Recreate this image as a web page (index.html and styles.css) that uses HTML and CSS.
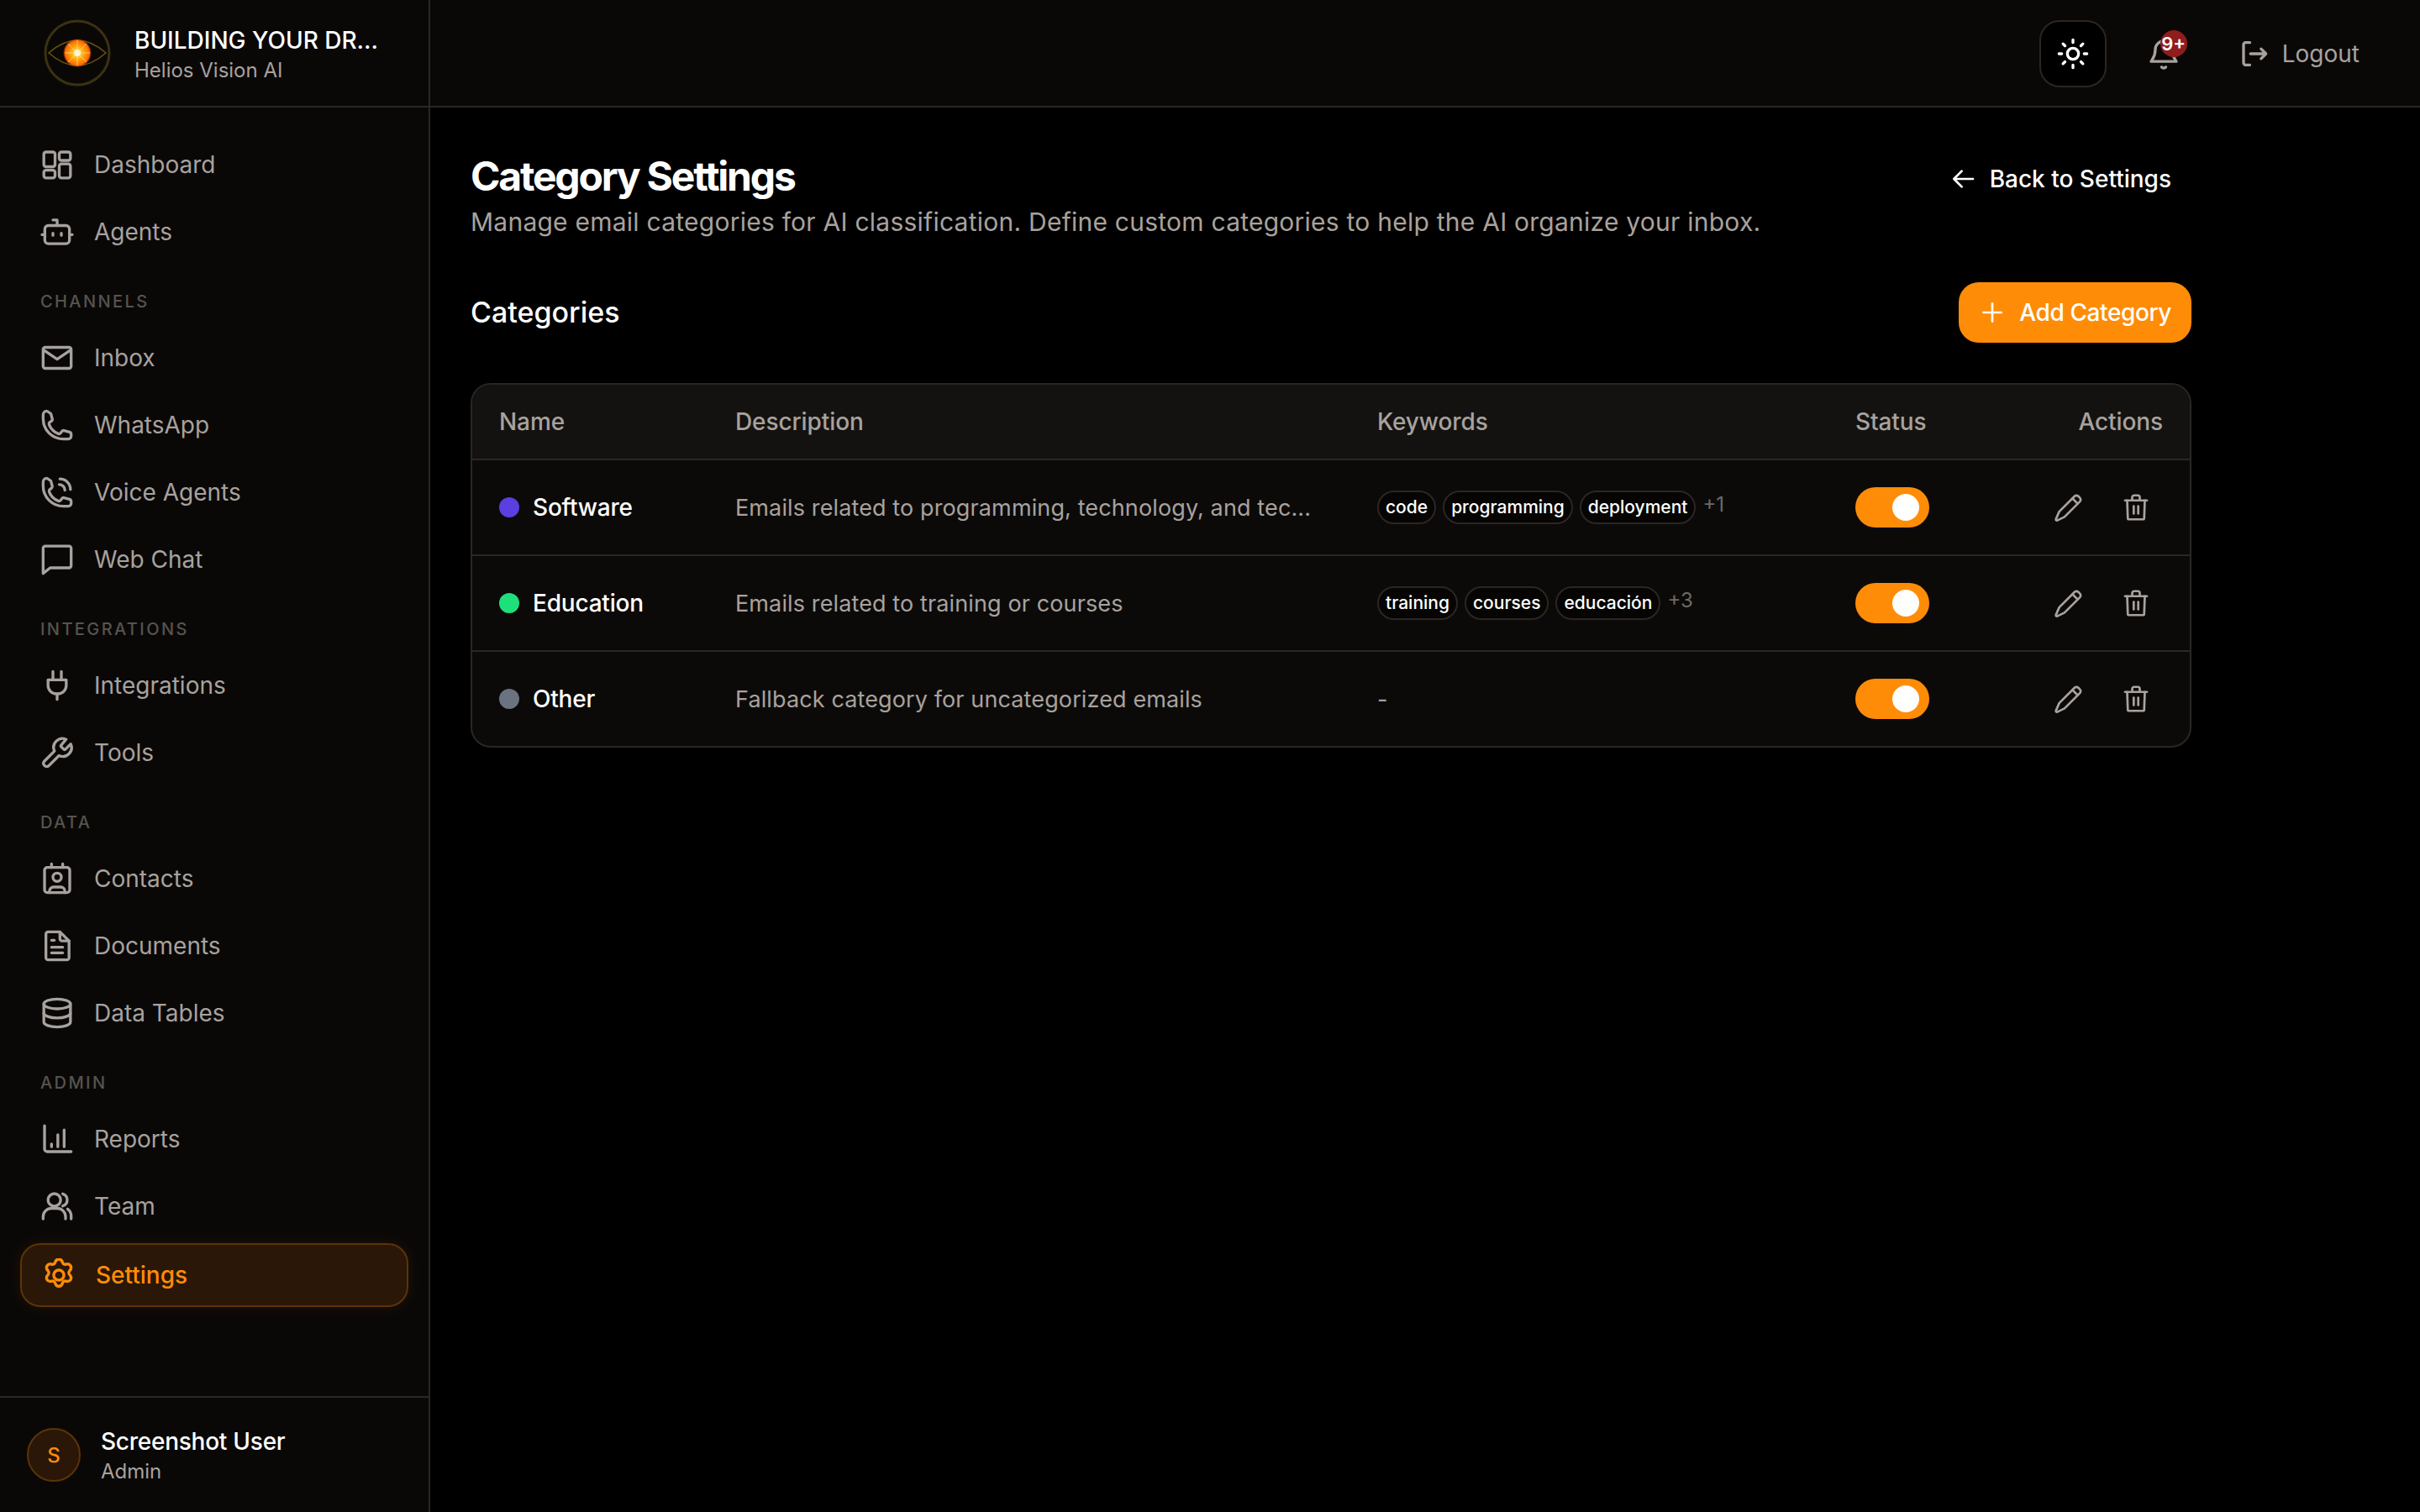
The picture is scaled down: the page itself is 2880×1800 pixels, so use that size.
FILE: index.html
```html
<!DOCTYPE html>
<html lang="en">
<head>
    <meta charset="UTF-8">
    <title>Category Settings - Helios Vision AI</title>
    <link rel="stylesheet" href="styles.css">
</head>
<body>
    <svg class="sprites" aria-hidden="true">
        <symbol id="i-edit" viewBox="0 0 24 24"><path d="M16.6 3.2a2.1 2.1 0 0 1 3 0l1.2 1.2a2.1 2.1 0 0 1 0 3L8.6 19.6 2.8 22.4c-.6.2-1.2-.4-1-1l2.6-6z"/><path d="M15 5l4 4"/></symbol>
        <symbol id="i-trash" viewBox="0 0 24 24"><path d="M3.300 6.500h17.400"/><path d="M5 6.500l.5 14a1 1 0 0 0 1 1h11a1 1 0 0 0 1-1l.5-14"/><path d="M9 6.500V4a1.500 1.500 0 0 1 1.500-1.500h3A1.500 1.500 0 0 1 15 4v2.500"/><path d="M10.200 11v6"/><path d="M13.800 11v6"/></symbol>
    </svg>

    <div class="app">
        <aside class="sidebar">
            <div class="brand">
                <svg class="brand-logo" viewBox="0 0 80 80">
                    <defs>
                        <radialGradient id="sun">
                            <stop offset="0" stop-color="#fff6d0"/>
                            <stop offset="0.2" stop-color="#ffd23a"/>
                            <stop offset="0.55" stop-color="#ff9a00"/>
                            <stop offset="0.85" stop-color="#ff6a00"/>
                            <stop offset="1" stop-color="#ff4a00" stop-opacity="0"/>
                        </radialGradient>
                    </defs>
                    <circle cx="40" cy="40" r="38" fill="none" stroke="#3b3112" stroke-width="3"/>
                    <path d="M6 40Q40 10 74 40Q40 70 6 40Z" fill="none" stroke="#6b5410" stroke-width="1.500"/>
                    <circle cx="40" cy="40" r="17" fill="url(#sun)"/>
                    <path d="M40 25v30M25 40h30M29 29l22 22M51 29L29 51" stroke="#ffd9a0" stroke-width="1" opacity="0.8"/>
                    <circle cx="40" cy="40" r="4" fill="#fff3d0"/>
                </svg>
                <div class="brand-text">
                    <div class="brand-name">BUILDING YOUR DR...</div>
                    <div class="brand-sub">Helios Vision AI</div>
                </div>
            </div>

            <nav class="nav">
                <a class="nav-item"><svg class="icon" viewBox="0 0 24 24"><rect x="2.500" y="3" width="8" height="10.500" rx="1.500"/><rect x="13.500" y="3" width="8" height="6" rx="1.500"/><rect x="2.500" y="16" width="8" height="5.500" rx="1.500"/><rect x="13.500" y="11.500" width="8" height="10" rx="1.500"/></svg>Dashboard</a>
                <a class="nav-item"><svg class="icon" viewBox="0 0 24 24"><rect x="3.200" y="7.500" width="17.600" height="13" rx="2.500"/><path d="M12 7.500V3.500H9"/><path d="M1.200 14h2M20.800 14h2"/><path d="M9 13v1.500M15 13v1.500"/></svg>Agents</a>

                <div class="nav-label">CHANNELS</div>
                <a class="nav-item"><svg class="icon" viewBox="0 0 24 24"><rect x="2" y="4.500" width="20" height="15" rx="1.500"/><path d="M2.500 6.500L12 13l9.500-6.500"/></svg>Inbox</a>
                <a class="nav-item"><svg class="icon" viewBox="0 0 24 24"><path d="M2 7.500c0 8 6.500 14.500 14.500 14.500H20a2 2 0 0 0 2-2v-1.400c0-.8-.5-1.400-1.200-1.600l-3.800-1c-.6-.2-1.200 0-1.600.5l-.9 1.200c-.4.500-1 .7-1.600.5a11 11 0 0 1-6.600-6.600c-.2-.6 0-1.200.5-1.600l1.200-.9c.5-.4.700-1 .5-1.600l-1-3.600C6 3 5.300 2 4.500 2 3 2 2 3.500 2 5z"/></svg>WhatsApp</a>
                <a class="nav-item"><svg class="icon" viewBox="0 0 24 24"><path d="M2 7.500c0 8 6.500 14.500 14.500 14.500H20a2 2 0 0 0 2-2v-1.400c0-.8-.5-1.400-1.200-1.600l-3.800-1c-.6-.2-1.200 0-1.600.5l-.9 1.200c-.4.500-1 .7-1.600.5a11 11 0 0 1-6.600-6.600c-.2-.6 0-1.200.5-1.600l1.200-.9c.5-.4.700-1 .5-1.600l-1-3.600C6 3 5.300 2 4.500 2 3 2 2 3.500 2 5z"/><path d="M14 2.500a7.500 7.500 0 0 1 7.500 7.500"/><path d="M13.500 6.500a4 4 0 0 1 4 4"/></svg>Voice Agents</a>
                <a class="nav-item"><svg class="icon" viewBox="0 0 24 24"><path d="M3.500 2.500h17A1.500 1.500 0 0 1 22 4v12.500a1.500 1.500 0 0 1-1.500 1.500H7l-5 4V4a1.500 1.500 0 0 1 1.500-1.500z"/></svg>Web Chat</a>

                <div class="nav-label">INTEGRATIONS</div>
                <a class="nav-item"><svg class="icon" viewBox="0 0 24 24"><path d="M9 2v6M15 2v6M12 18v4"/><path d="M5.500 8h13v4a6 6 0 0 1-6 6h-1a6 6 0 0 1-6-6z"/></svg>Integrations</a>
                <a class="nav-item"><svg class="icon" viewBox="0 0 24 24"><path d="M15 6.500a1 1 0 0 0 0 1.400l1.600 1.600a1 1 0 0 0 1.400 0l3.700-3.700a6.300 6.300 0 0 1-8.400 8.300l-7.400 7.400a2.300 2.300 0 0 1-3.200-3.200l7.400-7.400a6.300 6.300 0 0 1 8.300-8.400z"/></svg>Tools</a>

                <div class="nav-label">DATA</div>
                <a class="nav-item"><svg class="icon" viewBox="0 0 24 24"><rect x="3" y="4" width="18" height="18" rx="2"/><path d="M8 1.500V4M16 1.500V4"/><circle cx="12" cy="11" r="3"/><path d="M6.500 22v-1a3 3 0 0 1 3-3h5a3 3 0 0 1 3 3v1"/></svg>Contacts</a>
                <a class="nav-item"><svg class="icon" viewBox="0 0 24 24"><path d="M5.500 2h8.500l6.500 6.500v12a1.500 1.500 0 0 1-1.500 1.500H5.500A1.500 1.500 0 0 1 4 20.500v-17A1.500 1.500 0 0 1 5.500 2z"/><path d="M14 2v5a1.500 1.500 0 0 0 1.500 1.500h5"/><path d="M8 8h2M8 13h8M8 17h8"/></svg>Documents</a>
                <a class="nav-item"><svg class="icon" viewBox="0 0 24 24"><ellipse cx="12" cy="5.500" rx="9.500" ry="3.500"/><path d="M2.500 5.500v13c0 1.900 4.300 3.500 9.500 3.500s9.500-1.600 9.500-3.500v-13"/><path d="M2.500 12c0 1.900 4.300 3.500 9.500 3.500s9.500-1.600 9.500-3.500"/></svg>Data Tables</a>

                <div class="nav-label">ADMIN</div>
                <a class="nav-item"><svg class="icon" viewBox="0 0 24 24"><path d="M3 2.500V19a2 2 0 0 0 2 2h17"/><path d="M8 15.500v2M12.500 9v8.500M17 5.500v12"/></svg>Reports</a>
                <a class="nav-item"><svg class="icon" viewBox="0 0 24 24"><circle cx="10" cy="7.500" r="4.500"/><path d="M2 21v-1.500a6 6 0 0 1 6-6h4a6 6 0 0 1 6 6V21"/><path d="M16 3.200a4.500 4.500 0 0 1 0 8.600"/><path d="M19.500 14a6 6 0 0 1 2.500 5v2"/></svg>Team</a>
                <a class="nav-item active"><svg class="icon" viewBox="0 0 24 24"><g transform="translate(12 12) scale(1.14) translate(-12 -12)"><circle cx="12" cy="12" r="3.200"/><path d="M12 2c1.300 0 2 .9 2.300 2 .3.900 1.200 1.400 2.100 1.200 1.100-.3 2.300-.1 3 1 .6 1.200.2 2.200-.6 3-.7.700-.7 1.900 0 2.600.8.800 1.200 1.800.6 3-.7 1.100-1.900 1.300-3 1-.9-.2-1.800.3-2.100 1.200-.3 1.100-1 2-2.300 2s-2-.9-2.300-2c-.3-.9-1.200-1.400-2.100-1.200-1.100.3-2.300.1-3-1-.6-1.200-.2-2.200.6-3 .7-.7.7-1.900 0-2.600-.8-.8-1.200-1.800-.6-3 .7-1.100 1.900-1.300 3-1 .9.200 1.800-.3 2.100-1.200C10 2.900 10.700 2 12 2z"/></g></svg>Settings</a>
            </nav>

            <div class="user">
                <div class="avatar">S</div>
                <div>
                    <div class="user-name">Screenshot User</div>
                    <div class="user-role">Admin</div>
                </div>
            </div>
        </aside>

        <div class="page">
            <header class="topbar">
                <button class="theme-btn"><svg class="icon" viewBox="0 0 24 24"><circle cx="12" cy="12" r="4"/><path d="M12 2v2M12 20v2M2 12h2M20 12h2M4.900 4.900l1.400 1.400M17.700 17.700l1.400 1.400M4.900 19.100l1.400-1.400M17.700 6.300l1.400-1.400"/></svg></button>
                <button class="bell-btn">
                    <svg class="icon" viewBox="0 0 24 24"><path d="M6 9a6 6 0 0 1 12 0c0 5 2 6.500 3 8.500H3c1-2 3-3.500 3-8.500z"/><path d="M10.500 21.500a2 2 0 0 0 3 0"/></svg>
                    <span class="badge">9+</span>
                </button>
                <button class="logout-btn"><svg class="icon" viewBox="0 0 24 24"><path d="M10.500 4H7.500A1.500 1.500 0 0 0 6 5.500v13A1.500 1.500 0 0 0 7.500 20h3"/><path d="M11 12h11M18.500 8.500L22 12l-3.500 3.500"/></svg>Logout</button>
            </header>

            <main class="content">
                <div class="page-head">
                    <div>
                        <h1>Category Settings</h1>
                        <p class="subtitle">Manage email categories for AI classification. Define custom categories to help the AI organize your inbox.</p>
                    </div>
                    <a class="back-link"><svg class="icon-sm" viewBox="0 0 24 24"><path d="M21 12H4M11 5l-7 7 7 7"/></svg>Back to Settings</a>
                </div>

                <div class="section-head">
                    <h2>Categories</h2>
                    <button class="add-btn"><svg class="icon-sm" viewBox="0 0 24 24"><path d="M12 4v16M4 12h16"/></svg>Add Category</button>
                </div>

                <div class="table-wrap">
                    <table class="cat-table">
                        <colgroup>
                            <col class="col-name"><col class="col-desc"><col class="col-keys"><col class="col-status"><col>
                        </colgroup>
                        <thead>
                            <tr><th>Name</th><th>Description</th><th>Keywords</th><th>Status</th><th class="right">Actions</th></tr>
                        </thead>
                        <tbody>
                            <tr>
                                <td><div class="cat-name"><span class="dot dot-indigo"></span>Software</div></td>
                                <td class="desc">Emails related to programming, technology, and tec...</td>
                                <td><div class="tags"><span class="tag">code</span><span class="tag">programming</span><span class="tag">deployment</span><span class="more">+1</span></div></td>
                                <td><span class="toggle"></span></td>
                                <td><div class="actions"><svg class="icon-act"><use href="#i-edit"/></svg><svg class="icon-act"><use href="#i-trash"/></svg></div></td>
                            </tr>
                            <tr>
                                <td><div class="cat-name"><span class="dot dot-green"></span>Education</div></td>
                                <td class="desc">Emails related to training or courses</td>
                                <td><div class="tags"><span class="tag">training</span><span class="tag">courses</span><span class="tag">educación</span><span class="more">+3</span></div></td>
                                <td><span class="toggle"></span></td>
                                <td><div class="actions"><svg class="icon-act"><use href="#i-edit"/></svg><svg class="icon-act"><use href="#i-trash"/></svg></div></td>
                            </tr>
                            <tr>
                                <td><div class="cat-name"><span class="dot dot-gray"></span>Other</div></td>
                                <td class="desc">Fallback category for uncategorized emails</td>
                                <td class="desc">-</td>
                                <td><span class="toggle"></span></td>
                                <td><div class="actions"><svg class="icon-act"><use href="#i-edit"/></svg><svg class="icon-act"><use href="#i-trash"/></svg></div></td>
                            </tr>
                        </tbody>
                    </table>
                </div>
            </main>
        </div>
    </div>
</body>
</html>
```

FILE: styles.css
```css
* {
    box-sizing: border-box;
}
html, body {
    height: 100%;
}
body {
    margin: 0;
    background: #000;
    color: #fff;
    font-family: "Inter", "Liberation Sans", sans-serif;
}
.sprites {
    display: none;
}
.icon, .icon-sm, .icon-act {
    fill: none;
    stroke: currentColor;
    stroke-linecap: round;
    stroke-linejoin: round;
    flex: none;
}
.icon {
    width: 40px;
    height: 40px;
    stroke-width: 2;
}
.icon-sm {
    width: 32px;
    height: 32px;
    stroke-width: 2;
}
.icon-act {
    width: 36px;
    height: 36px;
    stroke-width: 1.8;
    color: #a8a29e;
}
.app {
    display: flex;
    height: 1800px;
}

/* sidebar */
.sidebar {
    width: 512px;
    flex: none;
    display: flex;
    flex-direction: column;
    background: #0a0807;
    border-right: 2px solid #2b2623;
}
.brand {
    height: 128px;
    flex: none;
    display: flex;
    align-items: center;
    gap: 28px;
    padding-left: 52px;
    border-bottom: 2px solid #2b2623;
}
.brand-logo {
    width: 80px;
    height: 80px;
    flex: none;
}
.brand-text {
    padding-top: 2px;
}
.brand-name {
    font-size: 28px;
    font-weight: 500;
    line-height: 40px;
    white-space: nowrap;
}
.brand-sub {
    font-size: 24px;
    line-height: 32px;
    color: #a8a29e;
}
.nav {
    flex: 1;
    padding: 32px 24px 0;
}
.nav-item {
    display: flex;
    align-items: center;
    gap: 24px;
    height: 72px;
    margin-bottom: 8px;
    padding-left: 24px;
    font-size: 28px;
    color: #a8a29e;
}
.nav-label {
    height: 32px;
    margin: 31px 0 15px 24px;
    font-size: 20px;
    font-weight: 500;
    line-height: 32px;
    letter-spacing: 2.4px;
    color: #57534e;
}
.nav-item.active {
    height: 76px;
    color: #ff8c07;
    font-weight: 500;
    background: #2a1708;
    border: 2px solid #5c3308;
    border-radius: 24px;
    box-shadow: 0 0 16px rgba(255, 140, 7, 0.1);
}
.nav-item.active .icon {
    stroke-width: 1.8;
}
.user {
    height: 138px;
    flex: none;
    display: flex;
    align-items: center;
    gap: 24px;
    padding-left: 32px;
    border-top: 2px solid #2b2623;
}
.avatar {
    width: 64px;
    height: 64px;
    display: flex;
    align-items: center;
    justify-content: center;
    border-radius: 50%;
    background: #2a1708;
    border: 2px solid #5c3308;
    color: #ff8c07;
    font-size: 24px;
    font-weight: 500;
}
.user-name {
    font-size: 28px;
    font-weight: 500;
    line-height: 40px;
    letter-spacing: -0.25px;
}
.user-role {
    font-size: 24px;
    line-height: 32px;
    color: #a8a29e;
}

/* topbar */
.page {
    flex: 1;
    min-width: 0;
}
.topbar {
    height: 128px;
    display: flex;
    align-items: center;
    justify-content: flex-end;
    padding: 2px 48px 0 0;
    background: #0a0807;
    border-bottom: 2px solid #2b2623;
}
.topbar button {
    border: none;
    background: none;
    font: inherit;
    color: #a8a29e;
    padding: 0;
}
.topbar .theme-btn {
    width: 80px;
    height: 80px;
    display: flex;
    align-items: center;
    justify-content: center;
    margin-right: 48px;
    background: #000;
    color: #fff;
    border: 2px solid #2b2623;
    border-radius: 24px;
}
.bell-btn {
    position: relative;
    width: 40px;
    height: 40px;
    margin-right: 41px;
}
.badge {
    position: absolute;
    top: -8px;
    right: -8px;
    width: 32px;
    height: 32px;
    border-radius: 50%;
    background: #8f1d1d;
    color: #fff;
    font-size: 22px;
    font-weight: 600;
    line-height: 32px;
    text-align: center;
}
.logout-btn {
    display: flex;
    align-items: center;
    gap: 16px;
    height: 72px;
    padding: 0 24px !important;
    font-size: 28px !important;
}

/* content */
.content {
    width: 2144px;
    padding: 52px 48px;
}
.page-head {
    display: flex;
    justify-content: space-between;
    align-items: flex-start;
}
h1 {
    margin: 0;
    font-size: 48px;
    font-weight: 700;
    line-height: 60px;
    letter-spacing: -2.2px;
}
.subtitle {
    margin: 0;
    font-size: 30px;
    line-height: 48px;
    letter-spacing: 0.24px;
    color: #a8a29e;
}
.back-link {
    display: flex;
    align-items: center;
    gap: 16px;
    height: 60px;
    padding: 0 24px;
    font-size: 28px;
    font-weight: 500;
    margin-top: 3px;
}
.section-head {
    display: flex;
    justify-content: space-between;
    align-items: center;
    margin-top: 48px;
}
h2 {
    margin: 0;
    padding-bottom: 2px;
    font-size: 34px;
    font-weight: 500;
}
.add-btn {
    display: flex;
    align-items: center;
    gap: 16px;
    height: 72px;
    padding: 0 24px;
    border: none;
    border-radius: 24px;
    background: #ff8c07;
    color: #fff;
    font: inherit;
    font-size: 28px;
    font-weight: 500;
    letter-spacing: -0.4px;
}

/* table */
.table-wrap {
    margin-top: 48px;
    background: #0c0a09;
    border: 2px solid #2b2623;
    border-radius: 24px;
    overflow: hidden;
}
.cat-table {
    width: 100%;
    table-layout: fixed;
    border-collapse: collapse;
}
.col-name { width: 281px; }
.col-desc { width: 764px; }
.col-keys { width: 569px; }
.col-status { width: 180px; }
th {
    height: 89px;
    padding: 0 32px;
    text-align: left;
    font-size: 28px;
    font-weight: 500;
    letter-spacing: -0.1px;
    color: #a8a29e;
    background: #141210;
    border-bottom: 2px solid #2b2623;
}
th.right {
    text-align: right;
}
td {
    height: 114px;
    padding: 0 32px;
    font-size: 28px;
    border-bottom: 2px solid #2b2623;
}
tr:last-child td {
    height: 113px;
    border-bottom: none;
}
.cat-name {
    display: flex;
    align-items: center;
    gap: 16px;
    font-weight: 500;
    letter-spacing: -0.2px;
}
.dot {
    width: 24px;
    height: 24px;
    border-radius: 50%;
}
.dot-indigo { background: #5b3fe0; }
.dot-green { background: #1de07a; }
.dot-gray { background: #6b7280; }
.desc {
    font-size: 27px;
    letter-spacing: 0.12px;
    color: #a8a29e;
    white-space: nowrap;
}
.tags {
    display: flex;
    align-items: center;
    gap: 8px;
}
.tag {
    height: 40px;
    padding: 0 8px;
    font-size: 21px;
    font-weight: 500;
    line-height: 36px;
    background: #060504;
    border: 2px solid #2b2623;
    border-radius: 20px;
    white-space: nowrap;
}
.more {
    margin-top: -8px;
    font-size: 24px;
    color: #6f6a65;
}
.toggle {
    display: flex;
    justify-content: flex-end;
    align-items: center;
    width: 88px;
    height: 48px;
    padding-right: 12px;
    border-radius: 24px;
    background: #ff8c07;
}
.toggle::after {
    content: "";
    width: 32px;
    height: 32px;
    border-radius: 50%;
    background: #fff;
}
.actions {
    display: flex;
    justify-content: flex-end;
    align-items: center;
    gap: 44px;
    padding-right: 14px;
}
```
